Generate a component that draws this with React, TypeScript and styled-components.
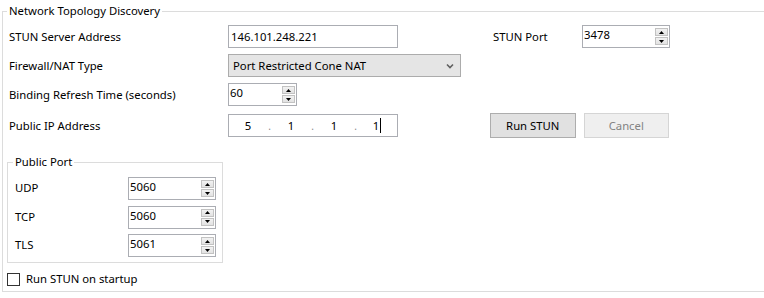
import React from "react";
import styled, { createGlobalStyle } from "styled-components";

const Global = createGlobalStyle`
  html, body { margin: 0; padding: 0; background: #ffffff; }
  body { font-family: "Noto Sans", "Open Sans", sans-serif; font-size: 11.3px; color: #000; }
  * { box-sizing: border-box; }
`;

const Page = styled.div`
  width: 764px;
  height: 298px;
  overflow: hidden;
  padding: 11px 0 0 2px;
`;

const Group = styled.div<{ $w?: string; $h: number; $pad: string }>`
  position: relative;
  width: ${(p) => p.$w ?? "auto"};
  height: ${(p) => p.$h}px;
  border: 1px solid #dcdcdc;
  padding: ${(p) => p.$pad};
`;

const OuterGroup = styled(Group)`
  border-right: none;
`;

const Caption = styled.span<{ $left: number }>`
  position: absolute;
  top: -9px;
  left: ${(p) => p.$left}px;
  padding: 0 2px;
  background: #ffffff;
  line-height: 16px;
  white-space: nowrap;
`;

const MainGrid = styled.div`
  display: grid;
  grid-template-columns: 219px 265px 89px 87px;
  grid-template-rows: 23px 23px 24px 25px;
  row-gap: 6px;
  align-items: center;
`;

const Label = styled.span`
  line-height: 16px;
  white-space: nowrap;
`;

const TextBox = styled.div<{ $w: number }>`
  width: ${(p) => p.$w}px;
  height: 23px;
  border: 1px solid #abadb3;
  background: #fff;
  padding: 0 2px;
  display: flex;
  align-items: center;
  line-height: 16px;
  align-self: start;
`;

const Select = styled.div`
  width: 233px;
  height: 23px;
  border: 1px solid #acacac;
  background: #e5e5e5;
  display: flex;
  align-items: center;
  justify-content: space-between;
  padding: 0 6px 0 4px;
  line-height: 16px;
`;

const SpinBox = styled.div<{ $w: number }>`
  width: ${(p) => p.$w}px;
  height: 23px;
  border: 1px solid #abadb3;
  background: #fff;
  display: flex;
  align-items: stretch;
  align-self: start;
`;

const SpinValue = styled.span`
  flex: 1;
  padding: 1px 0 0 1px;
  line-height: 16px;
`;

const SpinButtons = styled.div`
  width: 13px;
  margin: 2px 1px 2px 0;
  display: flex;
  flex-direction: column;
  gap: 1px;
`;

const SpinButton = styled.div`
  flex: 1;
  border: 1px solid #c2c2c2;
  background: linear-gradient(#f2f2f2, #e2e2e2);
  display: flex;
  align-items: center;
  justify-content: center;
`;

const IpBox = styled.div`
  width: 170px;
  height: 23px;
  border: 1px solid #abadb3;
  background: #fff;
  display: flex;
  align-items: center;
  padding-left: 14px;
  line-height: 16px;
`;

const Octet = styled.span`
  width: 10px;
  display: flex;
  justify-content: center;
  align-items: center;
`;

const Sep = styled.span`
  width: 33px;
  text-align: center;
  color: #8a8a8a;
  font-size: 10px;
`;

const Caret = styled.span`
  width: 1px;
  height: 15px;
  background: #000;
  margin-left: 1px;
`;

const ButtonRow = styled.div`
  grid-column: 3 / 5;
  margin-left: -3px;
  display: flex;
  gap: 8px;
  align-self: stretch;
`;

const Button = styled.div<{ $disabled?: boolean }>`
  width: 86px;
  height: 25px;
  border: 1px solid ${(p) => (p.$disabled ? "#d5d5d5" : "#adadad")};
  background: ${(p) => (p.$disabled ? "#efefef" : "#e1e1e1")};
  color: ${(p) => (p.$disabled ? "#838383" : "#000")};
  display: flex;
  align-items: center;
  justify-content: center;
  line-height: 16px;
`;

const PortGroupWrap = styled.div`
  margin: 24px 0 0 -2px;
`;

const PortGrid = styled.div`
  display: grid;
  grid-template-columns: 113px 88px;
  grid-auto-rows: 22px;
  row-gap: 6.5px;
  align-items: center;
`;

const CheckRow = styled.div`
  margin: 8px 0 0 -2px;
  display: flex;
  align-items: center;
  gap: 6px;
  line-height: 16px;
`;

const CheckBox = styled.span`
  width: 13px;
  height: 13px;
  border: 1px solid #333;
  background: #fff;
`;

const Up = () => (
  <svg width="5" height="3" viewBox="0 0 5 3">
    <polygon points="0,3 5,3 2.5,0" fill="#000" />
  </svg>
);
const Down = () => (
  <svg width="5" height="3" viewBox="0 0 5 3">
    <polygon points="0,0 5,0 2.5,3" fill="#000" />
  </svg>
);

const Spin: React.FC<{ value: string; w: number }> = ({ value, w }) => (
  <SpinBox $w={w}>
    <SpinValue>{value}</SpinValue>
    <SpinButtons>
      <SpinButton><Up /></SpinButton>
      <SpinButton><Down /></SpinButton>
    </SpinButtons>
  </SpinBox>
);

const Chevron = () => (
  <svg width="8" height="6" viewBox="0 0 8 6">
    <polyline points="1,1.5 4,4.5 7,1.5" fill="none" stroke="#606060" strokeWidth="1.6" />
  </svg>
);

export default function App() {
  const ports: [string, string][] = [
    ["UDP", "5060"],
    ["TCP", "5060"],
    ["TLS", "5061"],
  ];
  return (
    <Page>
      <Global />
      <OuterGroup $w="770px" $h={281} $pad="13px 0 0 6px">
        <Caption $left={4}>Network Topology Discovery</Caption>
        <MainGrid>
          <Label>STUN Server Address</Label>
          <TextBox $w={170}>146.101.248.221</TextBox>
          <Label>STUN Port</Label>
          <Spin value="3478" w={88} />

          <Label>Firewall/NAT Type</Label>
          <Select>
            <span>Port Restricted Cone NAT</span>
            <Chevron />
          </Select>
          <span />
          <span />

          <Label>Binding Refresh Time (seconds)</Label>
          <Spin value="60" w={69} />
          <span />
          <span />

          <Label>Public IP Address</Label>
          <IpBox>
            <Octet>5</Octet>
            <Sep>.</Sep>
            <Octet>1</Octet>
            <Sep>.</Sep>
            <Octet>1</Octet>
            <Sep>.</Sep>
            <Octet>1<Caret /></Octet>
          </IpBox>
          <ButtonRow>
            <Button>Run STUN</Button>
            <Button $disabled>Cancel</Button>
          </ButtonRow>
        </MainGrid>

        <PortGroupWrap>
          <Group $w="216px" $h={101} $pad="14px 0 0 7px">
            <Caption $left={5}>Public Port</Caption>
            <PortGrid>
              {ports.map(([name, val]) => (
                <React.Fragment key={name}>
                  <Label>{name}</Label>
                  <Spin value={val} w={88} />
                </React.Fragment>
              ))}
            </PortGrid>
          </Group>
        </PortGroupWrap>

        <CheckRow>
          <CheckBox />
          <Label>Run STUN on startup</Label>
        </CheckRow>
      </OuterGroup>
    </Page>
  );
}
